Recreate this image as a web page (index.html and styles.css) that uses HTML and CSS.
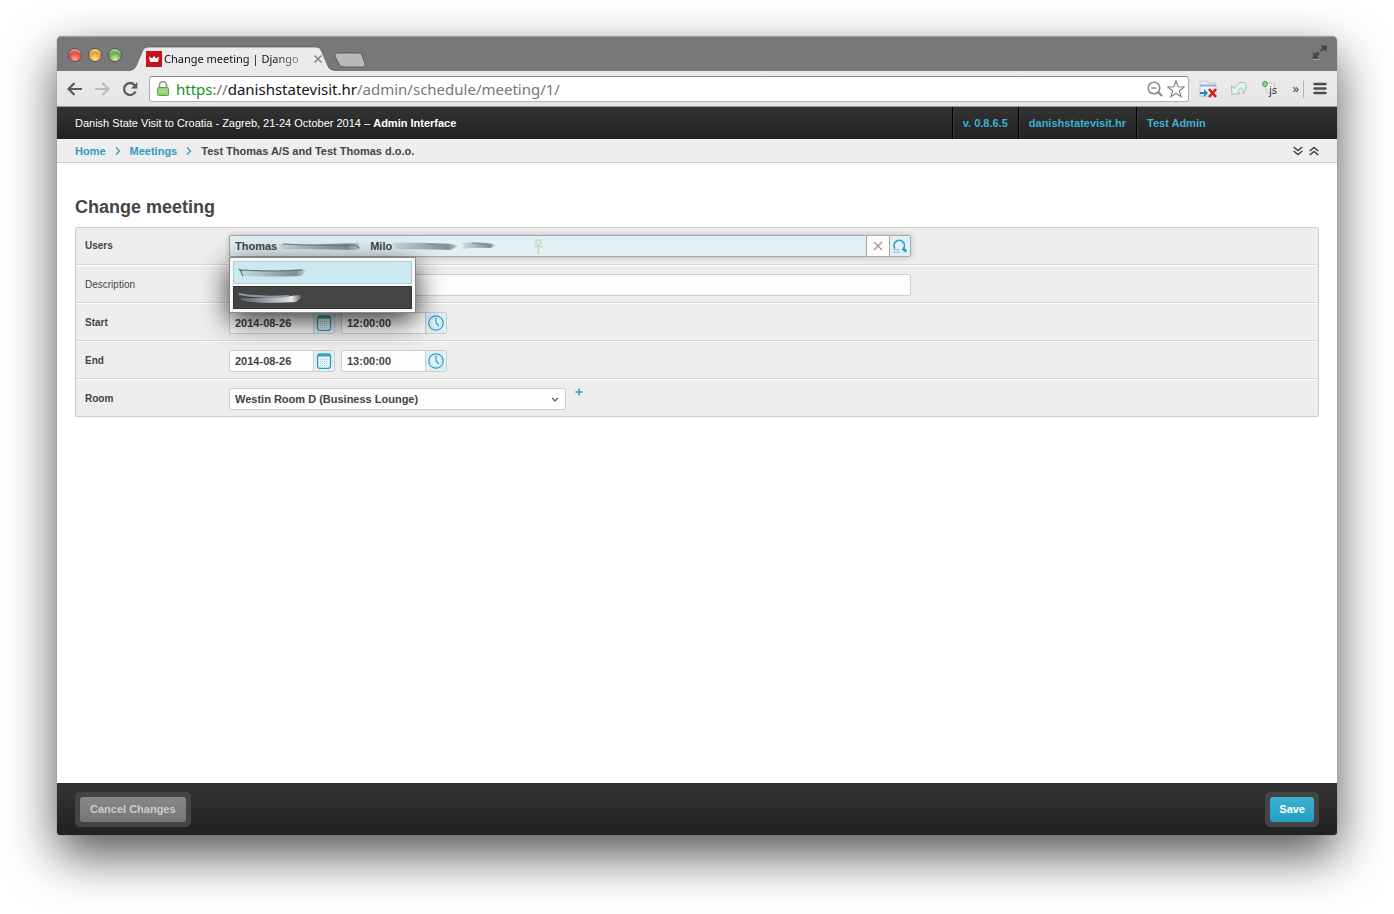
FILE: index.html
```html
<!DOCTYPE html>
<html lang="en">
<head>
<meta charset="utf-8">
<title>Change meeting | Django site admin</title>
<link rel="stylesheet" href="styles.css">
</head>
<body>
<div class="window">
  <div class="titlebar">
    <div class="lights">
      <button class="light red" aria-label="Close window"></button>
      <button class="light amber" aria-label="Minimise window"></button>
      <button class="light green" aria-label="Zoom window"></button>
    </div>
    <div class="tab">
      <svg class="tab-shape" viewBox="0 0 206 25" preserveAspectRatio="none" aria-hidden="true"><path d="M0 25C4 24 5 22 6 20L13 4Q14 1 18 1H186Q190 1 191 4L198 20C199 23 201 24 206 25Z" fill="#ebebeb"/><path d="M0 24C4 23 5 22 6 20L13 4Q14 1 18 1H186Q190 1 191 4L198 20C199 23 201 24 206 24" fill="none" stroke="#555" stroke-width=".7"/></svg>
      <svg class="favicon" viewBox="0 0 16 16" aria-hidden="true"><path d="M0 0h16v16H0z" fill="#c81218"/><path d="M3 5.500l3 2 2-2.500 2 2.500 3-2-1 5.500H4z" fill="#fff"/></svg>
      <span class="tab-title">Change meeting | Django</span>
      <button class="tab-close" aria-label="Close tab"><svg width="8" height="8" viewBox="0 0 8 8"><path d="M.5 .5l7 7M7.500 .5l-7 7" stroke="#858585" stroke-width="1.500"/></svg></button>
    </div>
    <button class="new-tab" aria-label="New tab"><svg width="32" height="16" viewBox="0 0 32 16"><path d="M3 1h22q2 0 3 2l3 9q1 3-2 3H9q-3 0-4-3L1 4Q0 1 3 1z" fill="#b9b9b9" stroke="#5c5c5c"/></svg></button>
    <button class="fullscreen" aria-label="Full screen"><svg width="16" height="16" viewBox="0 0 16 16"><path d="M8.500 1.500H15V8l-2-2-3 3-2.500-2.500 3-3zM7.500 14.500H1V8l2 2 2.500-2.500L8 10l-3 2.500z" fill="#484848"/><path d="M1 15.500h7M9 8.500l3-2" stroke="#aaa" stroke-width=".7"/></svg></button>
  </div>

  <div class="toolbar">
    <button class="tool back" aria-label="Back"><svg width="16" height="14" viewBox="0 0 16 14"><path d="M15 7H2M7.500 1L1.500 7l6 6" fill="none" stroke="#5b5b5b" stroke-width="2.200"/></svg></button>
    <button class="tool forward" aria-label="Forward"><svg width="16" height="14" viewBox="0 0 16 14"><path d="M1 7h13M8.500 1l6 6-6 6" fill="none" stroke="#bcbcbc" stroke-width="2.200"/></svg></button>
    <button class="tool reload" aria-label="Reload"><svg width="16" height="16" viewBox="0 0 16 16"><path d="M13.500 10.500A6 6 0 1 1 12.500 4" fill="none" stroke="#5b5b5b" stroke-width="2.300"/><path d="M15.300 1v6.500H9z" fill="#5b5b5b"/></svg></button>
    <div class="omnibox">
      <svg width="12" height="15" viewBox="0 0 12 15" aria-hidden="true"><path d="M2.500 7V4a3.500 3.500 0 0 1 7 0v3" fill="none" stroke="#8a9187" stroke-width="1.500"/><rect x=".5" y="6.500" width="11" height="8" rx="1" fill="#8fd070" stroke="#5fa04c"/><path d="M2 9h8M2 11h8" stroke="#b5ed91" stroke-width=".8"/></svg>
      <a class="url" href="#"><span class="scheme">https</span>://<span class="host">danishstatevisit.hr</span>/admin/schedule/meeting/1/</a>
      <button class="tool" aria-label="Zoom"><svg width="16" height="16" viewBox="0 0 16 16"><circle cx="7" cy="7" r="5.800" fill="none" stroke="#8a8a8a" stroke-width="1.500"/><path d="M11 11l4 4" stroke="#8a8a8a" stroke-width="2.200"/><path d="M4.500 7h5" stroke="#8a8a8a" stroke-width="1.300"/></svg></button>
      <button class="tool star" aria-label="Bookmark"><svg width="18" height="18" viewBox="0 0 18 18"><path d="M9 1l2.200 5.800 6 .2-4.800 3.800 1.700 6L9 13.300l-5.100 3.500 1.700-6L.8 7l6-.2z" fill="#fff" stroke="#7d7d7d" stroke-width="1.100"/></svg></button>
    </div>
    <div class="extensions">
      <button class="tool" aria-label="Clear data"><svg width="18" height="18" viewBox="0 0 18 18"><path d="M1 2q0-1 1-1h6l1 2h7q1 0 1 1v12H1z" fill="#eef0f4" stroke="#bcc7d8"/><path d="M1 5.500h16" stroke="#94acd2" stroke-width="2"/><path d="M1 12h4V9l4 4-4 4v-3H1z" fill="#2583c7"/><path d="M10 9l7 8M17 9l-7 8" stroke="#cd2318" stroke-width="2.600"/></svg></button>
      <button class="tool" aria-label="Undo"><svg width="18" height="16" viewBox="0 0 18 16"><path d="M1.500 5l3 2.500C8 3 9 1.500 12 1.500c5 0 5 6 1 11.500 0-4 0-6-2-6-1 0-2 1-3.500 3L10 12.500l-8 1z" fill="#e6f5ed" stroke="#8fc4ad"/></svg></button>
      <button class="tool" aria-label="JavaScript switch"><svg width="18" height="18" viewBox="0 0 18 18"><path d="M5 4l3 0 1-2 2 2 3 0-1 3 2 2-3 2-1 3-3-2-3 1 1-4-2-2z" fill="#f4f6f4" stroke="#b0b6b0" stroke-dasharray="2 1"/><circle cx="4" cy="4" r="2.500" fill="#87d887" stroke="#42a653"/><text class="js-label" x="8" y="14">js</text></svg></button>
      <button class="more" aria-label="More extensions">»</button>
      <button class="tool menu" aria-label="Menu"><svg width="14" height="13" viewBox="0 0 14 13"><path d="M1.500 2h11M1.500 6.500h11M1.500 11h11" stroke="#4c4c4c" stroke-width="2.500" stroke-linecap="round"/></svg></button>
    </div>
  </div>

  <header class="site-header">
    <h1 class="site-name">Danish State Visit to Croatia - Zagreb, 21-24 October 2014 – <b>Admin Interface</b></h1>
    <nav class="site-nav"><a href="#">v. 0.8.6.5</a><a href="#">danishstatevisit.hr</a><a href="#">Test Admin</a></nav>
  </header>

  <nav class="crumbs" aria-label="Breadcrumb">
    <a href="#">Home</a>
    <svg width="6" height="8" viewBox="0 0 6 8" aria-hidden="true"><path d="M1 .5L4.500 4 1 7.500" fill="none" stroke="#309bbf" stroke-width="1.300"/></svg>
    <a href="#">Meetings</a>
    <svg width="6" height="8" viewBox="0 0 6 8" aria-hidden="true"><path d="M1 .5L4.500 4 1 7.500" fill="none" stroke="#309bbf" stroke-width="1.300"/></svg>
    <span>Test Thomas A/S and Test Thomas d.o.o.</span>
    <div class="folds">
      <button class="tool" aria-label="Expand all"><svg width="10" height="10" viewBox="0 0 10 10"><path d="M.7 1L5 4.500 9.300 1M.7 5L5 8.500 9.300 5" fill="none" stroke="#444" stroke-width="1.600"/></svg></button>
      <button class="tool" aria-label="Collapse all"><svg width="10" height="10" viewBox="0 0 10 10"><path d="M.7 5L5 1.500 9.300 5M.7 9L5 5.500 9.300 9" fill="none" stroke="#444" stroke-width="1.600"/></svg></button>
    </div>
  </nav>

  <main class="content">
    <h2 class="page-title">Change meeting</h2>
    <form class="fields" id="meeting">
      <div class="row first">
        <label for="users">Users</label>
        <div class="lookup">
          <div class="tokens">
            <span>Thomas</span>
            <svg class="smear-a" width="84" height="12" viewBox="0 0 84 12" aria-hidden="true"><path d="M1 4Q30 5 82 3l1 6-5 1Q50 9 6 9z" fill="url(#smear)"/><path d="M6 4q30 2 72 1l4 3" fill="none" stroke="#6f7d7f" stroke-width="1.200"/></svg>
            <span class="second">Milo</span>
            <svg class="smear-b" width="104" height="12" viewBox="0 0 104 12" aria-hidden="true"><path d="M0 3Q30 2 60 4l6 2-7 4Q30 9 4 9z" fill="url(#smear)"/><path d="M70 3q15-2 32 1l1 2-4 2Q85 7 70 9l2-3z" fill="url(#smear)"/><path d="M35 4l27 3M80 3l20 2" stroke="#819194" stroke-width="1.200"/></svg>
            <input id="users" type="text" aria-label="Users" autocomplete="off">
            <svg class="ankh" width="11" height="15" viewBox="0 0 11 15" aria-hidden="true"><path d="M5.500 7C2 4 2 1 5.500 1s3.500 3 0 6zv7M1 7.500h9M4 14h3" fill="none" stroke="#c3dcc4" stroke-width="1.500"/></svg>
          </div>
          <button type="button" class="clear" aria-label="Clear users"><svg width="10" height="10" viewBox="0 0 10 10"><path d="M1 1l8 8M9 1L1 9" stroke="#929292" stroke-width="1.100"/></svg></button>
          <button type="button" class="find" aria-label="Look up users"><svg width="16" height="16" viewBox="0 0 16 16"><path d="M3 10.500A5.200 5.200 0 1 1 11.500 10.500" fill="none" stroke="#309bbf" stroke-width="1.700"/><path d="M9.500 11.500l2.500-2 3 3-1.500 2z" fill="#309bbf"/><path d="M1 11.500h6M1 14h7" stroke="#82c4d8" stroke-width="1.200"/></svg></button>
          <ul class="suggest">
            <li><button type="button" aria-label="First suggestion"><svg width="70" height="12" viewBox="0 0 70 12" aria-hidden="true"><path d="M3 3q30 2 62-1l3 2-5 5Q30 10 5 9z" fill="url(#smear)"/><path d="M1 2q2 2 5 1 30 2 58 0M2 3l3 6" fill="none" stroke="#5c7377" stroke-width="1.200"/></svg></button></li>
            <li class="active"><button type="button" aria-label="Second suggestion"><svg width="66" height="12" viewBox="0 0 66 12" aria-hidden="true"><path d="M2 6q30 1 60-3l1 3-5 4Q30 12 5 9z" fill="url(#smear-light)"/><path d="M1 2q20 4 50 2" fill="none" stroke="#8c979f" stroke-width="2"/></svg></button></li>
          </ul>
        </div>
      </div>
      <div class="row optional">
        <label for="description">Description</label>
        <input class="box" id="description" type="text">
      </div>
      <div class="row">
        <label for="start-date">Start</label>
        <div class="moment">
          <div class="picker"><input id="start-date" type="text" value="2014-08-26"><button type="button" aria-label="Pick start date"><svg width="16" height="16" viewBox="0 0 16 16"><use href="#calendar"/></svg></button></div>
          <div class="picker"><input type="text" value="12:00:00" aria-label="Start time"><button type="button" aria-label="Pick start time"><svg width="16" height="16" viewBox="0 0 16 16"><use href="#clock"/></svg></button></div>
        </div>
      </div>
      <div class="row">
        <label for="end-date">End</label>
        <div class="moment">
          <div class="picker"><input id="end-date" type="text" value="2014-08-26"><button type="button" aria-label="Pick end date"><svg width="16" height="16" viewBox="0 0 16 16"><use href="#calendar"/></svg></button></div>
          <div class="picker"><input type="text" value="13:00:00" aria-label="End time"><button type="button" aria-label="Pick end time"><svg width="16" height="16" viewBox="0 0 16 16"><use href="#clock"/></svg></button></div>
        </div>
      </div>
      <div class="row">
        <label for="room">Room</label>
        <div class="room">
          <div class="select">
            <select id="room"><option>Westin Room D (Business Lounge)</option></select>
            <svg width="8" height="6" viewBox="0 0 8 6" aria-hidden="true"><path d="M1 1l3 3 3-3" fill="none" stroke="#555" stroke-width="1.200"/></svg>
          </div>
          <button type="button" class="add" aria-label="Add room"><svg width="8" height="8" viewBox="0 0 8 8"><path d="M4 .5v7M.5 4h7" stroke="#309bbf" stroke-width="1.500"/></svg></button>
        </div>
      </div>
    </form>
  </main>

  <footer class="actions">
    <span class="well"><button class="cancel" type="button">Cancel Changes</button></span>
    <span class="well"><button class="save" type="submit" form="meeting">Save</button></span>
  </footer>
</div>

<svg class="defs" width="0" height="0" aria-hidden="true">
  <defs>
    <linearGradient id="smear" x2="1"><stop offset="0" stop-color="#b6c8cc" stop-opacity=".5"/><stop offset=".5" stop-color="#9aacb1"/><stop offset=".85" stop-color="#7f9095"/><stop offset="1" stop-color="#b4c4c7" stop-opacity=".6"/></linearGradient>
    <linearGradient id="smear-light" x2="1"><stop offset="0" stop-color="#5a6167"/><stop offset=".5" stop-color="#a5acb2"/><stop offset=".85" stop-color="#e2e4e5"/><stop offset="1" stop-color="#666"/></linearGradient>
    <symbol id="calendar" viewBox="0 0 16 16"><rect x="1.500" y="1" width="13" height="14.300" rx="2.500" fill="#e3f4f8" stroke="#309bbf" stroke-width="1.300"/><path d="M2 2.500h12" stroke="#309bbf" stroke-width="2"/><path d="M4 6.500h8M4 8.500h8M4 10.500h8M4 12.500h8" stroke="#a5d2e0" stroke-dasharray="1 1"/></symbol>
    <symbol id="clock" viewBox="0 0 16 16"><circle cx="8" cy="8" r="7.200" fill="#e3f4f8" stroke="#309bbf" stroke-width="1.200"/><path d="M8 3v5l3 3" fill="none" stroke="#309bbf" stroke-width="1.200"/><circle cx="8" cy="8" r="5.300" fill="none" stroke="#74b9ce" stroke-dasharray=".7 2.080"/></symbol>
  </defs>
</svg>
</body>
</html>
```
FILE: styles.css
```css
* { box-sizing: border-box; }

body {
  margin: 0;
  min-height: 100vh;
  padding: 36px 57px 79px;
  display: flex;
  background: #fff;
  color: #444;
  font: bold 11px/14px "Liberation Sans", Arial, sans-serif;
}

button, input, select { font: inherit; color: inherit; margin: 0; }
button { padding: 0; border: 0; background: none; }
svg { display: block; flex: none; }
a { color: #309bbf; text-decoration: none; }
.defs { position: absolute; }

.window {
  flex: 1;
  min-width: 0;
  display: flex;
  flex-direction: column;
  border-radius: 5px 5px 3px 3px;
  overflow: clip;
  background: #fff;
  box-shadow: 0 0 1px #555, 0 20px 50px rgba(0, 0, 0, .68);
}

/* browser frame */
.titlebar {
  height: 35px;
  padding: 0 9px 0 11px;
  display: flex;
  align-items: flex-end;
  background: #787878;
  border-top: 1px solid #a5a5a5;
}
.lights { display: flex; gap: 6px; align-self: center; margin-top: 2px; }
.light { width: 14px; height: 14px; border-radius: 50%; border: 1px solid #555; }
.red { background: radial-gradient(circle at 50% 85%, #ffa89a, #e2463f 55%, #fbd5d0); }
.amber { background: radial-gradient(circle at 50% 85%, #ffe88d, #e59b34 55%, #fceacb); }
.green { background: radial-gradient(circle at 50% 85%, #cbf5a5, #65a84c 55%, #e0f5d6); }
.tab {
  position: relative;
  width: 206px;
  height: 25px;
  margin-left: 8px;
  padding: 0 14px 0 16px;
  display: flex;
  align-items: center;
  gap: 2px;
}
.tab-shape { position: absolute; inset: 0; width: 100%; height: 100%; }
.favicon { position: relative; width: 16px; height: 16px; }
.tab-title {
  position: relative;
  flex: 1;
  white-space: nowrap;
  color: #111;
  font: 11px/16px "Noto Sans", "Open Sans", sans-serif;
  mask-image: linear-gradient(90deg, #000 110px, rgba(0, 0, 0, .3) 142px);
}
.tab-close { position: relative; }
.new-tab { margin: 0 0 3px -2px; }
.fullscreen { margin: 0 0 11px auto; }

.toolbar {
  height: 36px;
  padding: 0 10px;
  display: flex;
  align-items: center;
  background: linear-gradient(#ebebeb, #e6e6e6);
  border-bottom: 1px solid #999;
}
.back { margin-right: 11px; }
.forward { margin-right: 12px; }
.reload { margin-right: 11px; }
.omnibox {
  flex: 1;
  min-width: 0;
  height: 26px;
  padding: 0 3px 0 7px;
  display: flex;
  align-items: center;
  gap: 4px;
  background: #fff;
  border: 1px solid #b0b0b0;
  border-top-color: #8c8c8c;
  border-radius: 3px;
}
.url {
  flex: 1;
  padding-left: 3px;
  overflow: hidden;
  white-space: nowrap;
  color: #777;
  font: 15px/20px "Noto Sans", "Open Sans", sans-serif;
}
.scheme { color: #0a9a1c; }
.host { color: #111; }
.extensions { display: flex; align-items: center; gap: 13px; margin-left: 10px; }
.js-label { font: 11px "Noto Sans", sans-serif; fill: #333; }
.more { padding: 0 4px 2px 0; border-right: 1px solid #b5b5b5; font: 13px/16px "Noto Sans", sans-serif; }
.menu { margin-left: -4px; }

/* admin header */
.site-header {
  height: 32px;
  padding-left: 18px;
  display: flex;
  align-items: center;
  justify-content: space-between;
  background: linear-gradient(#333, #222);
}
.site-name { margin: 0; color: #fff; font-size: 11px; font-weight: normal; line-height: 14px; }
.site-nav { display: flex; align-self: stretch; }
.site-nav a { padding: 9px 10px; color: #3eb0d3; border-left: 1px solid #000; box-shadow: inset 1px 0 #383838; }
.site-nav a:last-child { min-width: 201px; }

.crumbs {
  height: 24px;
  padding: 0 18px;
  display: flex;
  align-items: center;
  gap: 9px;
  background: #eee;
  border-bottom: 1px solid #ccc;
}
.folds { display: flex; gap: 6px; margin-left: auto; }

/* change form */
.content { flex: 1; padding: 32px 18px; }
.page-title { margin: 0 0 8px; font-size: 18px; line-height: 24px; }
.fields { border: 1px solid #ccc; border-radius: 2px; background: #eee; }
.row {
  display: grid;
  grid-template-columns: 144px 12fr 7fr;
  align-items: center;
  padding: 8px 9px 6px;
  border-top: 1px solid #fff;
  border-bottom: 1px solid #d6d6d6;
}
.row.first { padding: 7px 9px; border-top: 0; }
.row:last-child { border-bottom: 0; }
.row label { font-size: 10px; }
.optional label { font-weight: normal; }

.box, .picker, .select select {
  height: 22px;
  border: 1px solid #ccc;
  border-radius: 2px;
  background: #fdfdfd;
}
.box { width: 100%; padding: 0 5px; }

.lookup { position: relative; display: flex; height: 22px; box-shadow: 0 0 6px rgba(0, 0, 0, .22); }
.tokens {
  flex: 1;
  min-width: 0;
  padding: 0 5px;
  display: flex;
  align-items: center;
  background: #e1f0f5;
  border: 1px solid #a5a5a5;
  border-radius: 2px 0 0 2px;
}
.smear-a, .smear-b, .suggest svg { filter: blur(.5px); }
.tokens .second { margin-left: 9px; }
.tokens input { width: 37px; padding: 0; border: 0; outline: 0; background: none; }
.clear, .find { width: 22px; display: grid; place-items: center; border: 1px solid #aaa; }
.clear { background: #fdfdfd; border-left: 0; border-right: 0; }
.find { background: #e1f0f5; border-radius: 0 2px 2px 0; }

.suggest {
  position: absolute;
  z-index: 2;
  top: 22px;
  left: 0;
  width: 187px;
  margin: 0;
  padding: 3px;
  display: grid;
  gap: 2px;
  list-style: none;
  background: #f8f8f8;
  border: 1px solid #888;
  box-shadow: 0 8px 28px rgba(0, 0, 0, .8);
}
.suggest li { border: 1px solid #b8cdd2; background: #cbe9f0; }
.suggest .active { border-color: #333; background: #444; }
.suggest button { display: flex; align-items: center; width: 100%; height: 21px; padding-left: 4px; }

.moment { display: flex; gap: 6px; }
.picker { display: flex; width: 106px; }
.picker input { flex: 1; min-width: 0; padding: 0 5px; border: 0; background: none; }
.picker button { width: 21px; display: grid; place-items: center; background: #e1f0f5; border-left: 1px solid #ccc; }

.room { display: flex; align-items: flex-start; gap: 9px; }
.select { position: relative; width: 337px; }
.select select { display: block; width: 100%; padding: 0 20px 0 5px; appearance: none; }
.select svg { position: absolute; right: 7px; top: 9px; pointer-events: none; }

/* action bar */
.actions {
  height: 52px;
  padding: 0 18px;
  display: flex;
  align-items: center;
  justify-content: space-between;
  background: linear-gradient(#333, #222);
}
.well { padding: 5px; border-radius: 5px; background: #444; }
.well button { display: block; height: 25px; padding: 0 10px; border-radius: 3px; }
.cancel { color: #ccc; background: linear-gradient(#888, #757575); }
.well .save { padding: 0 9px; color: #fff; background: linear-gradient(#3bb0d3, #219fc2); }
```
